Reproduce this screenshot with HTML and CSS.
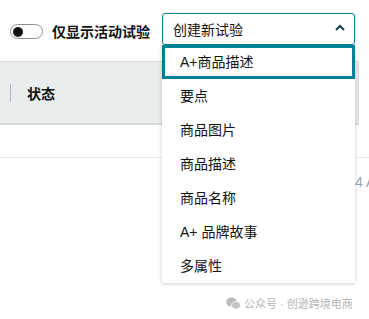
FILE: index.html
```html
<!DOCTYPE html>
<html>
<head>
<meta charset="utf-8">
<link rel="stylesheet" href="styles.css">
</head>
<body>

<div class="top">
  <span class="toggle"><span class="knob"></span></span>
  <span class="toggle-label">仅显示活动试验</span>
  <div class="picker">
    <div class="select">
      <span>创建新试验</span>
      <svg class="chev" width="12" height="8" viewBox="0 0 12 8"><path d="M2 6 L6 2 L10 6" fill="none" stroke="#0f3f4a" stroke-width="2"/></svg>
    </div>
    <ul class="menu">
      <li class="active">A+商品描述</li>
      <li>要点</li>
      <li>商品图片</li>
      <li>商品描述</li>
      <li>商品名称</li>
      <li>A+ 品牌故事</li>
      <li>多属性</li>
    </ul>
  </div>
</div>

<div class="thead">
  <span class="divider"></span>
  <span class="th">状态</span>
</div>
<div class="row"></div>
<div class="row2"><span class="date">4 A</span></div>

<div class="mark">
  <svg width="15" height="13" viewBox="0 0 15 13">
    <ellipse cx="5.5" cy="5" rx="5.3" ry="4.5" fill="#b9b9b9"/>
    <ellipse cx="10" cy="8.3" rx="4.6" ry="3.9" fill="#c4c4c4" stroke="#fff" stroke-width="0.8"/>
  </svg>
  <span>公众号 · 创逊跨境电商</span>
</div>

</body>
</html>
```

FILE: styles.css
```css
body { margin: 0; font-family: "Liberation Sans", "Noto Sans CJK SC", sans-serif; color: #0f1111; background: #fff; width: 369px; height: 319px; position: relative; overflow: hidden; }

.top { height: 61px; display: flex; align-items: flex-start; }

.toggle { margin: 24px 0 0 10px; width: 29px; height: 13px; border: 1px solid #8d9096; border-radius: 8px; display: flex; align-items: center; padding-left: 2px; }
.knob { width: 10px; height: 10px; border-radius: 50%; background: #111; }

.toggle-label { margin: 23px 0 0 9px; font-size: 14px; font-weight: bold; line-height: 18px; }

.picker { position: relative; margin: 13px 0 0 12px; width: 193px; }

.select { height: 30px; border: 1px solid #008296; border-radius: 3px; display: flex; align-items: center; justify-content: space-between; padding: 0 8px 0 10px; font-size: 14px; }
.chev { margin-bottom: 2px; }

.menu { position: absolute; left: 0; top: 32px; width: 193px; margin: 0; padding: 0; list-style: none; background: #fff; box-shadow: 0 1px 4px rgba(0,0,0,0.2); z-index: 2; }
.menu li { height: 34px; line-height: 34px; padding-left: 18px; font-size: 14px; box-sizing: border-box; }
.menu li.active { border: 3px solid #008296; padding-left: 15px; line-height: 28px; }

.thead { width: 359px; background: #eaeded; border-top: 1px solid #d5d9d9; border-bottom: 2px solid #d5d9d9; border-right: 1px solid #d5d9d9; display: flex; align-items: center; box-sizing: border-box; height: 64px; }
.divider { width: 1px; height: 18px; background: #aab7b8; margin: 0 16px 0 10px; }
.th { font-size: 14px; font-weight: bold; }

.row { height: 32px; border-bottom: 1px solid #e3e6e6; }
.row2 { height: 40px; display: flex; align-items: center; padding-left: 355px; }
.date { font-size: 14px; color: #97a3b6; padding-top: 8px; white-space: nowrap; }

.mark { position: absolute; left: 226px; top: 295px; display: flex; align-items: center; gap: 3px; font-size: 11px; color: #b4b4b4; white-space: nowrap; }
```
